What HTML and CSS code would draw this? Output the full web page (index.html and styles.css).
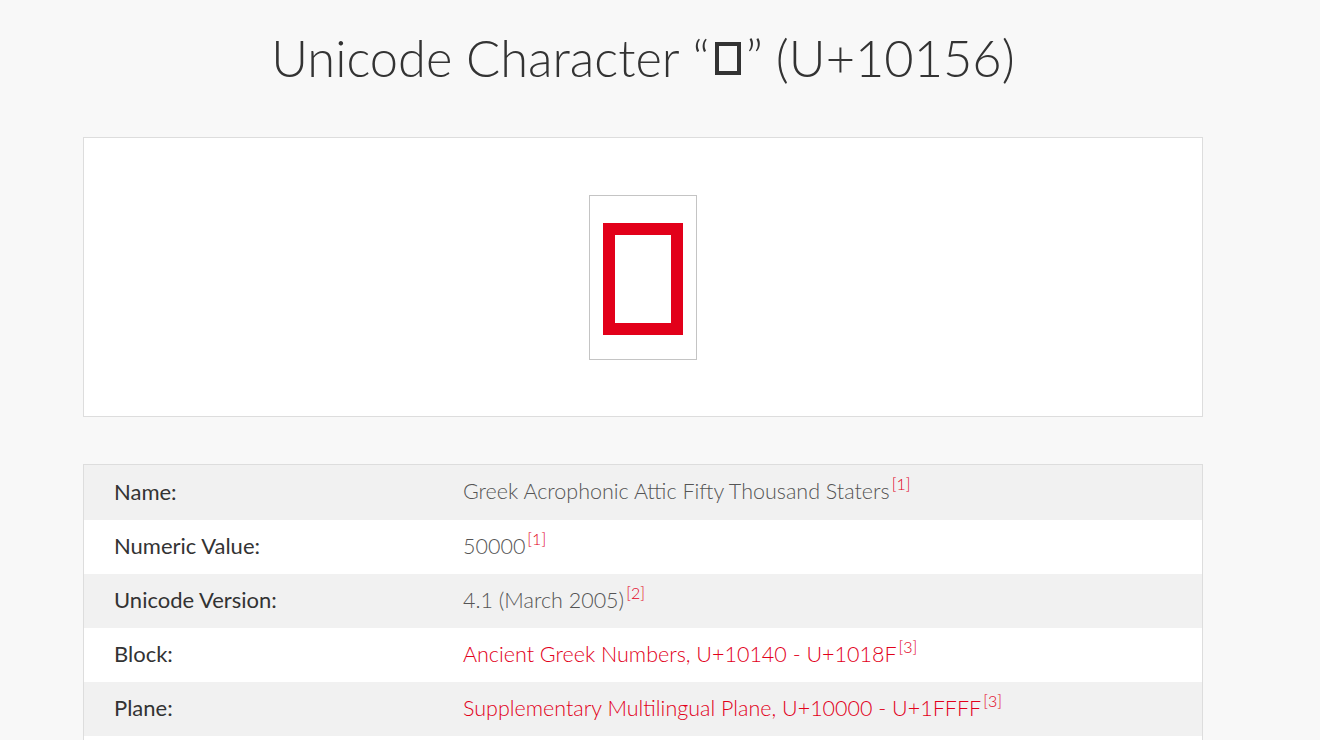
FILE: index.html
```html
<!DOCTYPE html>
<html lang="en">
<head>
<meta charset="utf-8">
<title>Unicode Character U+10156</title>
<link rel="stylesheet" href="styles.css">
</head>
<body>
<div class="page">
  <h1 class="title">Unicode Character “<span class="tofu" title="𐅖"></span>” (U+10156)</h1>
  <div class="card">
    <div class="glyph-box">
      <div class="glyph"></div>
    </div>
  </div>
  <div class="table">
    <div class="row">
      <div class="label">Name:</div>
      <div class="value">Greek Acrophonic Attic Fifty Thousand Staters<sup class="ref">[1]</sup></div>
    </div>
    <div class="row">
      <div class="label">Numeric Value:</div>
      <div class="value">50000<sup class="ref">[1]</sup></div>
    </div>
    <div class="row">
      <div class="label">Unicode Version:</div>
      <div class="value">4.1 (March 2005)<sup class="ref">[2]</sup></div>
    </div>
    <div class="row">
      <div class="label">Block:</div>
      <div class="value"><a class="link" href="#">Ancient Greek Numbers, U+10140 - U+1018F</a><sup class="ref">[3]</sup></div>
    </div>
    <div class="row">
      <div class="label">Plane:</div>
      <div class="value"><a class="link" href="#">Supplementary Multilingual Plane, U+10000 - U+1FFFF</a><sup class="ref">[3]</sup></div>
    </div>
    <div class="row row-empty"></div>
  </div>
</div>
</body>
</html>
```
FILE: styles.css
```css
html, body {
  margin: 0;
  padding: 0;
  background: #f8f8f8;
}
body {
  font-family: "Lato", "Open Sans", "Liberation Sans", sans-serif;
  color: #333;
}
.page {
  width: 1120px;
  margin-left: 83px;
  padding-top: 22px;
}
.title {
  margin: 0;
  font-weight: 300;
  font-size: 50.6px;
  line-height: 72px;
  text-align: center;
  color: #333;
}
.tofu {
  display: inline-block;
  width: 18px;
  height: 25px;
  border: 4px solid #333;
  vertical-align: 2px;
  margin: 0 5px 0 5px;
}
.card {
  margin-top: 43px;
  height: 278px;
  background: #fff;
  border: 1px solid #ddd;
  display: flex;
  align-items: center;
  justify-content: center;
}
.glyph-box {
  width: 106px;
  border: 1px solid #c4c4c4;
  display: flex;
  justify-content: center;
  padding-top: 27px;
  box-sizing: content-box;
  height: 136px;
}
.glyph {
  width: 56px;
  height: 88px;
  border: 12px solid #e2001a;
}
.table {
  margin-top: 47px;
  border: 1px solid #ddd;
  border-bottom: 0;
  background: #fff;
}
.row {
  display: grid;
  grid-template-columns: 379px 1fr;
  height: 54px;
  box-sizing: border-box;
  padding-bottom: 3px;
  align-items: center;
  font-size: 21.5px;
}
.row:first-child {
  height: 55px;
}
.row:nth-child(odd) {
  background: #f1f1f1;
}
.label {
  padding-left: 30px;
  font-size: 22px;
  font-weight: 400;
  color: #333;
}
.value {
  font-weight: 300;
  color: #555;
}
.link {
  color: #e2001a;
  text-decoration: none;
}
.ref {
  color: #e2001a;
  font-size: 16px;
  margin-left: 2px;
  vertical-align: 9px;
  line-height: 0;
}
```
